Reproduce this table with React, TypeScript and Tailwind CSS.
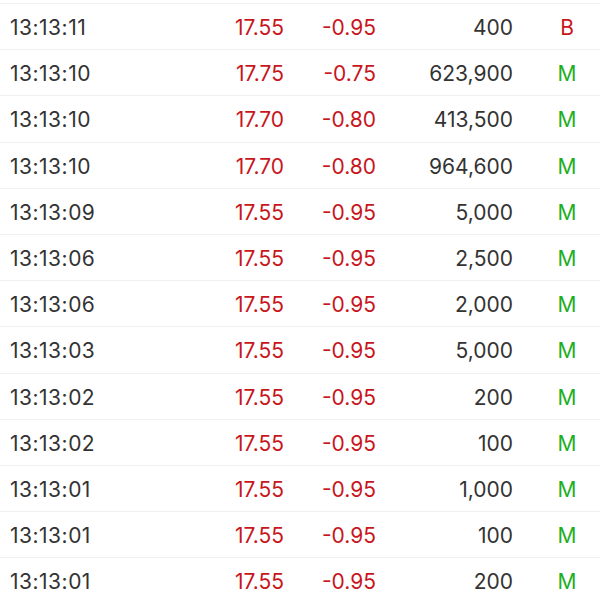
import React from "react";

type Row = { t: string; p: string; c: string; v: string; f: "B" | "M" };

const rows: Row[] = [
  { t: "13:13:11", p: "17.55", c: "-0.95", v: "400", f: "B" },
  { t: "13:13:10", p: "17.75", c: "-0.75", v: "623,900", f: "M" },
  { t: "13:13:10", p: "17.70", c: "-0.80", v: "413,500", f: "M" },
  { t: "13:13:10", p: "17.70", c: "-0.80", v: "964,600", f: "M" },
  { t: "13:13:09", p: "17.55", c: "-0.95", v: "5,000", f: "M" },
  { t: "13:13:06", p: "17.55", c: "-0.95", v: "2,500", f: "M" },
  { t: "13:13:06", p: "17.55", c: "-0.95", v: "2,000", f: "M" },
  { t: "13:13:03", p: "17.55", c: "-0.95", v: "5,000", f: "M" },
  { t: "13:13:02", p: "17.55", c: "-0.95", v: "200", f: "M" },
  { t: "13:13:02", p: "17.55", c: "-0.95", v: "100", f: "M" },
  { t: "13:13:01", p: "17.55", c: "-0.95", v: "1,000", f: "M" },
  { t: "13:13:01", p: "17.55", c: "-0.95", v: "100", f: "M" },
  { t: "13:13:01", p: "17.55", c: "-0.95", v: "200", f: "M" },
];

export default function App() {
  return (
    <div
      className="w-[600px] h-[600px] overflow-hidden bg-white text-[21px]"
      style={{ fontFamily: 'Inter, "Liberation Sans", Arial, sans-serif' }}
    >
      <div className="h-[3px]" />
      {rows.map((r, i) => (
        <div
          key={i}
          className="flex items-center h-[46.2px] pt-[2px] border-t border-[#f0f0f0] leading-none"
        >
          <div className="w-[200px] shrink-0 pl-[10px] tracking-[0.5px] text-[#333333]">{r.t}</div>
          <div className="w-[84px] shrink-0 text-right text-[#c8161d]">{r.p}</div>
          <div className="w-[92px] shrink-0 text-right text-[#c8161d]">{r.c}</div>
          <div className="w-[137px] shrink-0 text-right text-[#333333]">{r.v}</div>
          <div
            className={`w-[87px] shrink-0 pl-[21px] text-center ${
              r.f === "B" ? "text-[#c8161d]" : "text-[#1fae1f]"
            }`}
          >
            {r.f}
          </div>
        </div>
      ))}
    </div>
  );
}
